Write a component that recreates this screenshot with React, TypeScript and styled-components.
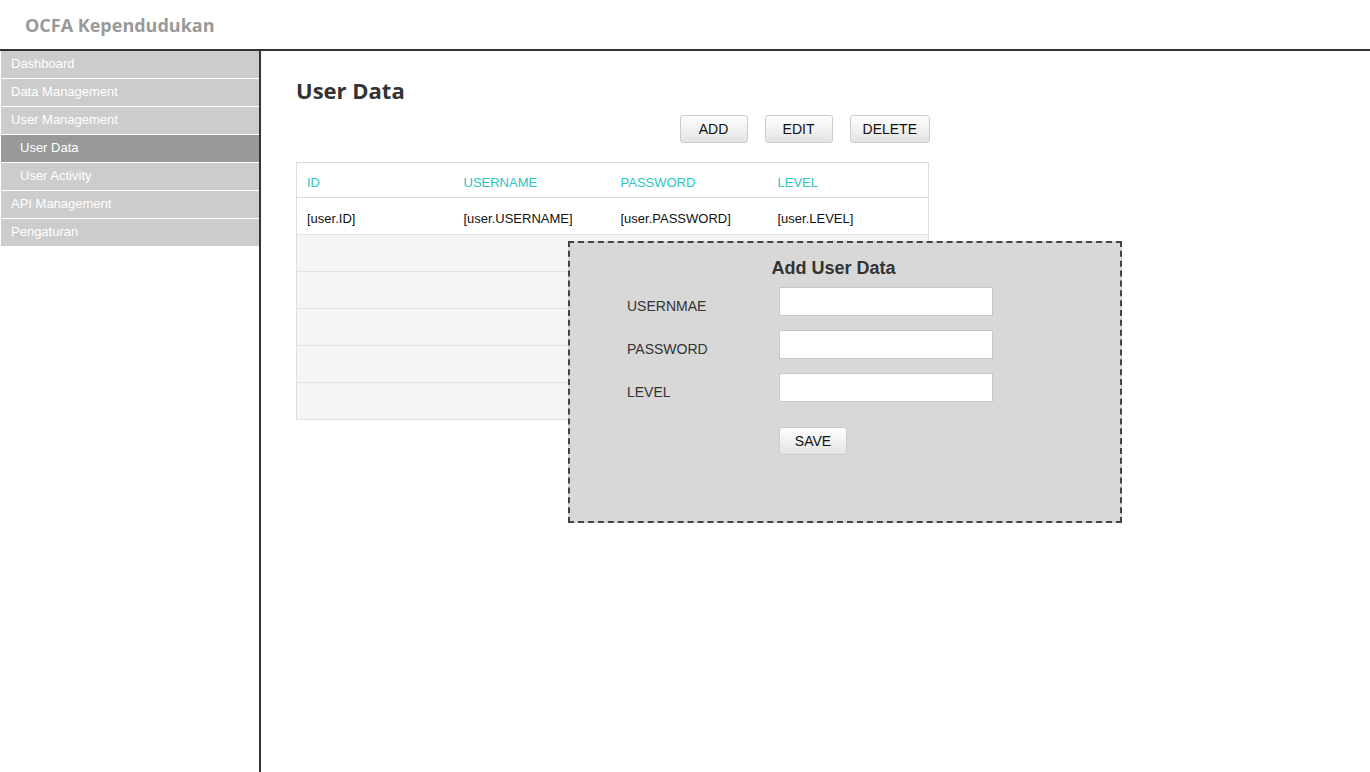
import React from 'react';
import styled, { createGlobalStyle } from 'styled-components';

const GlobalStyle = createGlobalStyle`
  html, body {
    margin: 0;
    padding: 0;
    background: #ffffff;
    font-family: "Liberation Sans", Arial, sans-serif;
  }
  * {
    box-sizing: border-box;
  }
`;

const Page = styled.div`
  position: relative;
  width: 100%;
  min-height: 772px;
  display: flex;
  flex-direction: column;
`;

const Header = styled.header`
  height: 51px;
  display: flex;
  align-items: center;
  padding: 2px 0 0 25px;
  border-bottom: 2px solid #333333;
`;

const Brand = styled.h1`
  margin: 0;
  font-family: "Open Sans", sans-serif;
  font-size: 18px;
  font-weight: 700;
  color: #999999;
  padding-bottom: 1px;
`;

const Body = styled.div`
  flex: 1;
  display: flex;
  min-height: 721px;
`;

const Sidebar = styled.nav`
  width: 261px;
  flex-shrink: 0;
  padding-left: 1px;
  border-right: 2px solid #333333;
`;

const NavItem = styled.div<{ $sub?: boolean; $active?: boolean }>`
  height: 28px;
  line-height: 25px;
  border-bottom: 1px solid #ffffff;
  background: ${({ $active }) => ($active ? '#999999' : '#cccccc')};
  color: #ffffff;
  font-size: 13px;
  padding-left: ${({ $sub }) => ($sub ? '19px' : '10px')};
`;

const Content = styled.main`
  flex: 1;
  padding: 24px 0 0 35px;
`;

const Title = styled.h2`
  margin: 0;
  font-family: "Open Sans", sans-serif;
  font-size: 22px;
  font-weight: 700;
  color: #333333;
  line-height: 30px;
`;

const Toolbar = styled.div`
  width: 634px;
  display: flex;
  justify-content: flex-end;
  gap: 17px;
  margin-top: 10px;
`;

const Button = styled.button`
  height: 28px;
  min-width: 68px;
  padding: 0 12px;
  border: 1px solid #cccccc;
  border-radius: 3px;
  background: linear-gradient(#ffffff, #e3e3e3);
  font-family: "Liberation Sans", Arial, sans-serif;
  font-size: 14px;
  color: #111111;
  cursor: pointer;
`;

const Table = styled.table`
  width: 633px;
  margin-top: 19px;
  border-collapse: collapse;
  border: 1px solid #dddddd;
  font-size: 13px;
  table-layout: fixed;
`;

const HeadCell = styled.th<{ $w?: number }>`
  height: 35px;
  padding: 4px 0 0 10px;
  text-align: left;
  font-weight: 400;
  color: #2ec4c4;
  border-bottom: 1px solid #dddddd;
  width: ${({ $w }) => ($w ? `${$w}px` : 'auto')};
`;

const Row = styled.tr<{ $empty?: boolean }>`
  height: 37px;
  background: ${({ $empty }) => ($empty ? '#f5f5f5' : '#ffffff')};
  border-bottom: 1px solid #e2e2e2;
`;

const Cell = styled.td`
  padding: 4px 0 0 10px;
  color: #111111;
`;

const Modal = styled.div`
  position: absolute;
  left: 568px;
  top: 241px;
  width: 554px;
  height: 282px;
  background: #d8d8d8;
  border: 2px dashed #444444;
  padding: 13px 0 0 57px;
`;

const ModalTitle = styled.h3`
  margin: 0 0 0 -57px;
  padding-right: 23px;
  text-align: center;
  font-size: 18px;
  font-weight: 700;
  color: #333333;
  line-height: 24px;
`;

const Form = styled.div`
  display: grid;
  grid-template-columns: 152px 214px;
  row-gap: 14px;
  margin-top: 7px;
`;

const Label = styled.label`
  font-size: 14px;
  color: #333333;
  padding-top: 11px;
`;

const Input = styled.input`
  height: 29px;
  width: 214px;
  border: 1px solid #c8c8c8;
  background: #ffffff;
  margin: 0;
`;

const Actions = styled.div`
  grid-column: 2;
  margin-top: 11px;
`;

const rows = [
  { id: '[user.ID]', username: '[user.USERNAME]', password: '[user.PASSWORD]', level: '[user.LEVEL]' },
];

const App: React.FC = () => {
  return (
    <Page>
      <GlobalStyle />
      <Header>
        <Brand>OCFA Kependudukan</Brand>
      </Header>
      <Body>
        <Sidebar>
          <NavItem>Dashboard</NavItem>
          <NavItem>Data Management</NavItem>
          <NavItem>User Management</NavItem>
          <NavItem $sub $active>User Data</NavItem>
          <NavItem $sub>User Activity</NavItem>
          <NavItem>API Management</NavItem>
          <NavItem>Pengaturan</NavItem>
        </Sidebar>
        <Content>
          <Title>User Data</Title>
          <Toolbar>
            <Button>ADD</Button>
            <Button>EDIT</Button>
            <Button>DELETE</Button>
          </Toolbar>
          <Table>
            <thead>
              <tr>
                <HeadCell $w={157}>ID</HeadCell>
                <HeadCell $w={157}>USERNAME</HeadCell>
                <HeadCell $w={157}>PASSWORD</HeadCell>
                <HeadCell>LEVEL</HeadCell>
              </tr>
            </thead>
            <tbody>
              {rows.map((r) => (
                <Row key={r.id}>
                  <Cell>{r.id}</Cell>
                  <Cell>{r.username}</Cell>
                  <Cell>{r.password}</Cell>
                  <Cell>{r.level}</Cell>
                </Row>
              ))}
              {[0, 1, 2, 3, 4].map((i) => (
                <Row key={i} $empty>
                  <Cell />
                  <Cell />
                  <Cell />
                  <Cell />
                </Row>
              ))}
            </tbody>
          </Table>
        </Content>
      </Body>
      <Modal>
        <ModalTitle>Add User Data</ModalTitle>
        <Form>
          <Label>USERNMAE</Label>
          <Input />
          <Label>PASSWORD</Label>
          <Input />
          <Label>LEVEL</Label>
          <Input />
          <Actions>
            <Button>SAVE</Button>
          </Actions>
        </Form>
      </Modal>
    </Page>
  );
};

export default App;
